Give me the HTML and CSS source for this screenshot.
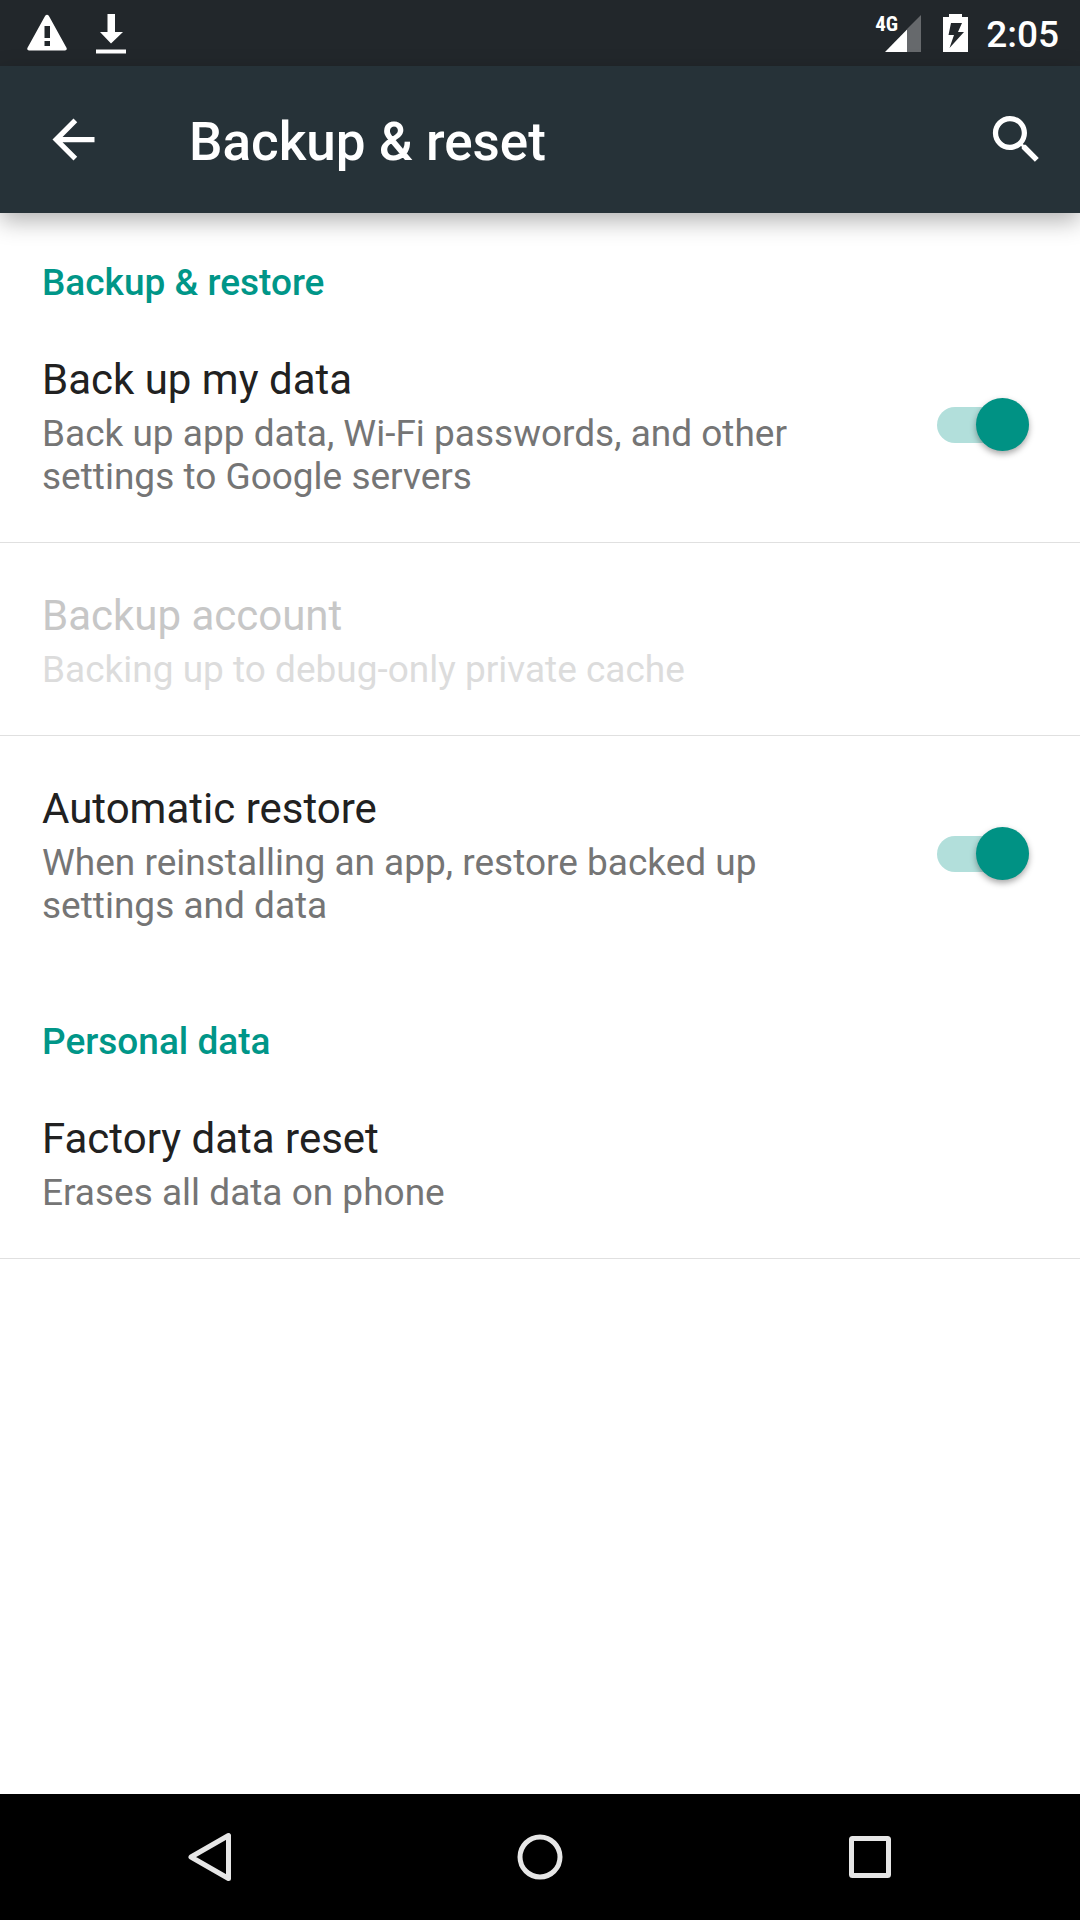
FILE: index.html
```html
<!DOCTYPE html>
<html lang="en">
<head>
<meta charset="utf-8">
<meta name="viewport" content="width=device-width, initial-scale=1">
<title>Backup &amp; reset</title>
<link rel="stylesheet" href="styles.css">
</head>
<body>
<div class="screen">
  <div class="status-bar">
    <div class="notifications">
      <svg width="40" height="40" viewBox="0 0 40 40" role="img" aria-label="Warning"><path fill="#fff" fill-rule="evenodd" d="M18.200 1.800Q20 -.2 21.800 1.800L39.600 34Q40.300 36.500 38 36.500H2Q-.3 36.500 .4 34ZM17.500 12V24H23V12ZM17.500 27V32H23V27Z"/></svg>
      <svg width="30" height="40" viewBox="0 0 30 40" role="img" aria-label="Download"><path fill="#fff" d="M11.500 0H19V18H27L15 29.500 4 18H11.500ZM0 35.500H30V39.500H0Z"/></svg>
    </div>
    <div class="system">
      <div class="signal">
        <svg width="36" height="37" viewBox="0 0 36 37" aria-hidden="true"><path fill="#66696c" d="M36 0V37H22V14Z"/><path fill="#fff" d="M0 37 22 14.500V37Z"/></svg>
        <span class="network">4G</span>
      </div>
      <svg class="battery" width="25" height="38" viewBox="0 0 25 38" role="img" aria-label="Charging"><path fill="#fff" fill-rule="evenodd" d="M6 0H19V3H25V38H0V3H6ZM8 9 5.500 21H11L6.500 34 21 18H15L19 9Z"/></svg>
      <span class="clock">2:05</span>
    </div>
  </div>
  <header class="app-bar">
    <button class="icon-button" type="button" aria-label="Navigate up"><svg viewBox="0 0 24 24"><path fill="#fff" d="M20 11H7.830l5.590-5.590L12 4l-8 8 8 8 1.410-1.410L7.830 13H20v-2z"/></svg></button>
    <h1 class="app-title">Backup &amp; reset</h1>
    <button class="icon-button" type="button" aria-label="Search"><svg viewBox="0 0 24 24"><path fill="#fff" d="M15.500 14h-.79l-.28-.27C15.410 12.590 16 11.110 16 9.500 16 5.910 13.090 3 9.500 3S3 5.910 3 9.500 5.910 16 9.500 16c1.610 0 3.090-.59 4.230-1.570l.27.28v.79l5 4.990L20.490 19l-4.990-5zm-6 0C7.010 14 5 11.990 5 9.500S7.010 5 9.500 5 14 7.010 14 9.500 11.990 14 9.500 14z"/></svg></button>
  </header>
  <main class="content">
    <section>
      <h2 class="category">Backup &amp; restore</h2>
      <label class="row row-divided">
        <span class="row-text">
          <span class="row-title">Back up my data</span>
          <span class="row-summary">Back up app data, Wi-Fi passwords, and other settings to Google servers</span>
        </span>
        <input class="switch" type="checkbox" role="switch" checked>
      </label>
      <button class="row row-divided" type="button" disabled>
        <span class="row-text">
          <span class="row-title">Backup account</span>
          <span class="row-summary">Backing up to debug-only private cache</span>
        </span>
      </button>
      <label class="row">
        <span class="row-text">
          <span class="row-title">Automatic restore</span>
          <span class="row-summary">When reinstalling an app, restore backed up settings and data</span>
        </span>
        <input class="switch" type="checkbox" role="switch" checked>
      </label>
    </section>
    <section>
      <h2 class="category">Personal data</h2>
      <button class="row row-divided" type="button">
        <span class="row-text">
          <span class="row-title">Factory data reset</span>
          <span class="row-summary">Erases all data on phone</span>
        </span>
      </button>
    </section>
  </main>
  <nav class="nav-bar">
    <button class="nav-button" type="button" aria-label="Back"><svg width="50" height="50" viewBox="0 0 50 50"><path d="M43.500 3.500V46.500L6 25Z"/></svg></button>
    <button class="nav-button" type="button" aria-label="Home"><svg width="50" height="50" viewBox="0 0 50 50"><circle cx="25" cy="25" r="20"/></svg></button>
    <button class="nav-button" type="button" aria-label="Overview"><svg width="50" height="50" viewBox="0 0 50 50"><rect x="6.500" y="6.500" width="37" height="37" rx="1"/></svg></button>
  </nav>
</div>
</body>
</html>
```
FILE: styles.css
```css
* {
  box-sizing: border-box;
}

body {
  margin: 0;
  background: #fff;
  font-family: Roboto, "Noto Sans", sans-serif;
}

button {
  margin: 0;
  border: 0;
  padding: 0;
  background: none;
  color: inherit;
  font: inherit;
  text-align: left;
}

svg {
  display: block;
}

.screen {
  display: flex;
  flex-direction: column;
  min-height: 100vh;
}

.status-bar {
  display: flex;
  align-items: center;
  justify-content: space-between;
  height: 66px;
  padding: 0 21px 0 27px;
  background: #22272b;
  color: #fff;
}

.notifications,
.system {
  display: flex;
  align-items: center;
}

.notifications {
  gap: 29px;
}

.notifications svg {
  margin-top: 2px;
}

.signal {
  position: relative;
}

.network {
  position: absolute;
  top: -1px;
  left: -10px;
  font-family: "Roboto Condensed", "Liberation Sans Narrow", Roboto, sans-serif;
  font-size: 21px;
  font-weight: 700;
  line-height: 21px;
}

.battery {
  margin: 0 18px 0 22px;
}

.clock {
  padding-top: 3px;
  font-size: 37px;
  font-weight: 500;
  line-height: 44px;
}

.app-bar {
  position: relative;
  display: flex;
  align-items: center;
  height: 147px;
  padding: 0 32px 0 42px;
  background: #263238;
  color: #fff;
  box-shadow: 0 8px 22px rgba(0, 0, 0, 0.3);
}

.icon-button {
  width: 63px;
  height: 63px;
}

.app-title {
  flex: 1;
  margin: 0 0 0 84px;
  padding-top: 4px;
  font-size: 53px;
  font-weight: 500;
  line-height: 62px;
}

.content {
  flex: 1;
}

.category {
  margin: 0;
  padding: 48px 42px 3px;
  color: #009688;
  font-size: 37px;
  font-weight: 500;
  line-height: 43px;
}

.row {
  display: flex;
  align-items: center;
  gap: 80px;
  width: 100%;
  padding: 44px 51px 44px 42px;
  border-bottom: 1px solid transparent;
}

.row-divided {
  border-bottom-color: #e0e0e0;
}

.row-text {
  display: flex;
  flex: 1;
  flex-direction: column;
  gap: 8px;
  padding-top: 4px;
}

.row-title {
  color: #212121;
  font-size: 42px;
  line-height: 49px;
}

.row-summary {
  color: #757575;
  font-size: 37px;
  line-height: 43px;
}

.row:disabled .row-title {
  color: #c7c7c7;
}

.row:disabled .row-summary {
  color: #dcdcdc;
}

.switch {
  display: flex;
  align-items: center;
  justify-content: flex-end;
  flex: none;
  width: 92px;
  height: 36px;
  margin: 0;
  border-radius: 18px;
  background: #b2dfdb;
  appearance: none;
}

.switch::before {
  content: "";
  flex: none;
  width: 53px;
  height: 53px;
  border-radius: 50%;
  background: #009284;
  box-shadow: 0 3px 6px rgba(0, 0, 0, 0.35);
}

.switch:not(:checked) {
  justify-content: flex-start;
  background: #bdbdbd;
}

.switch:not(:checked)::before {
  background: #f1f1f1;
}

.nav-bar {
  display: flex;
  height: 126px;
  padding: 0 45px;
  background: #000;
}

.nav-button {
  display: flex;
  flex: 1;
  align-items: center;
  justify-content: center;
}

.nav-button svg {
  fill: none;
  stroke: #e6e6e6;
  stroke-width: 5;
  stroke-linejoin: round;
}
```
